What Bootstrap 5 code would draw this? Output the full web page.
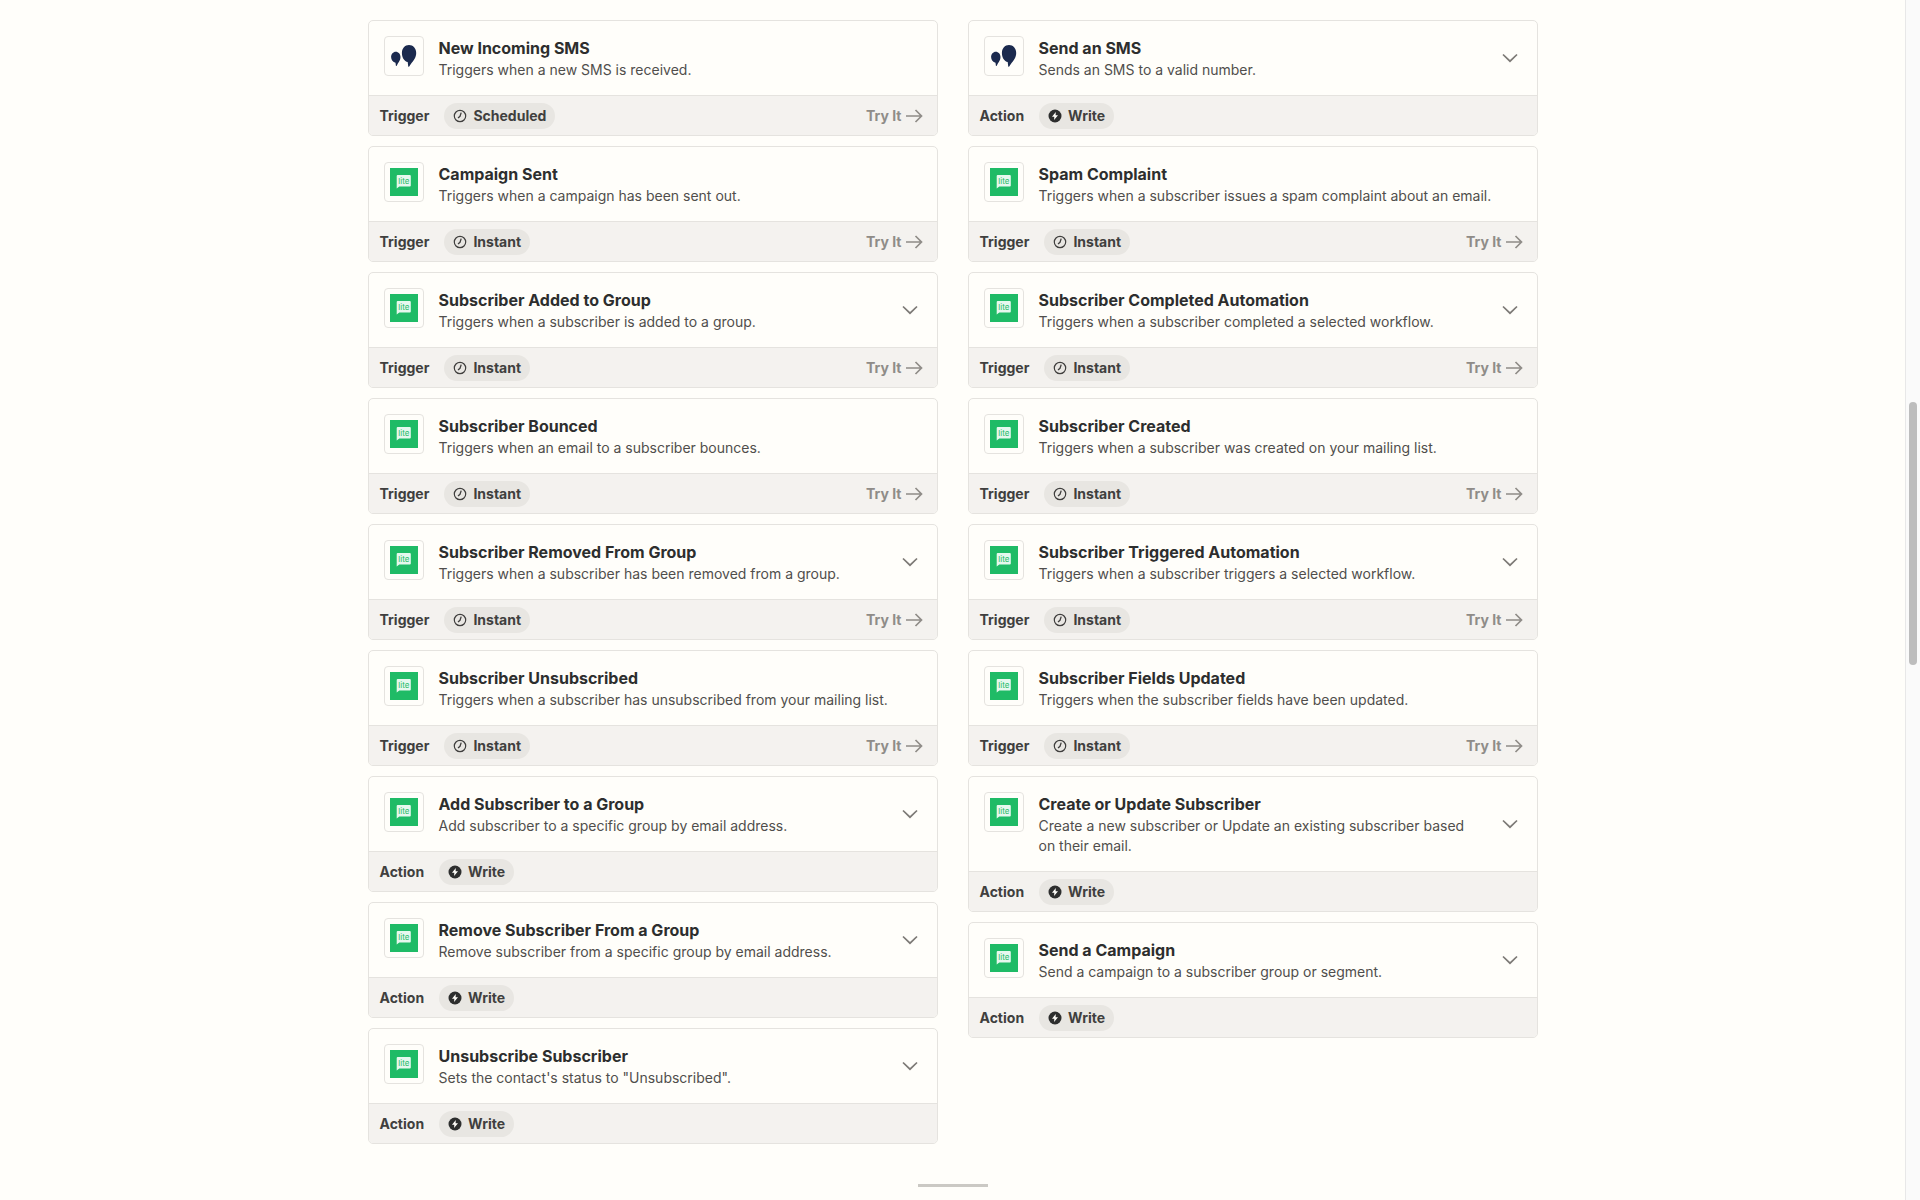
<!DOCTYPE html>
<html lang="en">
<head>
  <meta charset="UTF-8" />
  <meta name="viewport" content="width=device-width, initial-scale=1" />
  <title>MailerLite triggers and actions</title>
  <link href="https://cdn.jsdelivr.net/npm/bootstrap@5.3.0/dist/css/bootstrap.min.css" rel="stylesheet" />
  <style>
    html, body { height: 100%; overflow: hidden; }
    body { background: #fffefa; font-family: Inter, "Liberation Sans", sans-serif; color: #2d2e2e; }
    .page-main { flex: 1 1 auto; min-width: 0; height: 1200px; position: relative; }
    .app-list { width: 1170px; padding-top: 20px; gap: 30px; }
    .app-col { width: 570px; gap: 10px; }
    .app-card { border: 1px solid #e5e3df; border-radius: 5px; background: #fffefa; overflow: hidden; }
    .app-head { padding: 15px 19px 15px 15px; gap: 15px; }
    .app-logo { width: 40px; height: 40px; flex: none; border: 1px solid #e5e3df; border-radius: 4px; background: #fffefa; }
    .app-logo svg { display: block; width: 28px; height: 28px; }
    .app-title { font-size: 16px; line-height: 20px; font-weight: 700; color: #2d2e2e; margin: 2px 0; }
    .app-desc { font-size: 14px; line-height: 20px; color: #504e4c; margin: 0; }
    .app-chevron { flex: none; width: 16px; height: 10px; margin: 0 0 0 9px; align-self: center; color: #7d7a76; }
    .app-foot { height: 40px; padding: 0 11px; background: #f4f2ef; border-top: 1px solid #e5e3df; font-size: 14px; font-weight: 700; }
    .app-kind { color: #403f3e; }
    .app-pill { height: 26px; padding: 0 9px; margin-left: 15px; gap: 6px; background: #e8e6e2; border-radius: 13px; color: #403f3e; }
    .app-pill svg { width: 14px; height: 14px; flex: none; }
    .try-link { color: #8f8c88; gap: 4px; margin-right: 3px; }
    .try-link svg { width: 17px; height: 14px; }
    .page-rule { position: absolute; left: 918px; top: 1184px; width: 70px; height: 3px; background: #cbc9c4; }
    .fake-scroll { flex: none; width: 15px; height: 1200px; background: #fafafa; border-left: 1px solid #e8e8e8; position: relative; }
    .fake-thumb { position: absolute; left: 3px; top: 402px; width: 8px; height: 263px; border-radius: 4px; background: #bdbdbd; }
  </style>
</head>
<body>
  <svg class="d-none">
    <symbol id="ico-sms" viewBox="0 0 28 28">
      <path fill="#1b2a4e" d="M19 3c4.100 0 7.200 3.300 7.200 8 0 4.500-2.900 8-5 10.500l-2 3c-.3.500-.9.400-1-.2l-.5-4.300C14.300 19.500 11.900 15.500 11.900 11c0-4.700 3-8 7.100-8z"/>
      <path fill="#1b2a4e" d="M5.800 9.700c2.600 0 4.700 2.300 4.700 5.200 0 2.800-1.400 4.700-2.500 6.300l-1.300 2.600c-.2.400-.7.300-.8-.1l-.4-3C3 20 1.100 17.800 1.100 14.900 1.100 12 3.200 9.700 5.800 9.700z"/>
    </symbol>
    <symbol id="ico-lite" viewBox="0 0 28 28">
      <rect width="28" height="28" fill="#1fbb66"/>
      <path fill="#e6f8ee" d="M7.700 7h12.100a1 1 0 0 1 1 1v9.500a1 1 0 0 1-1 1H9.300L6.700 20.500V8a1 1 0 0 1 1-1z"/>
      <text x="13.800" y="15.500" text-anchor="middle" font-family="Inter, sans-serif" font-size="8" fill="#1fbb66">lite</text>
    </symbol>
    <symbol id="ico-clock" viewBox="0 0 14 14">
      <circle cx="7" cy="7" r="5.700" fill="none" stroke="#403f3e" stroke-width="1.200"/>
      <path fill="none" stroke="#403f3e" stroke-width="1.300" d="M8.200 3.600 7 7.300 5 9"/>
    </symbol>
    <symbol id="ico-write" viewBox="0 0 14 14">
      <circle cx="7" cy="7" r="6.500" fill="#2d2e2e"/>
      <path fill="#fffefa" d="M7.800 3 4 7.700h2.300L6.100 11 10 6.300H7.600z"/>
    </symbol>
    <symbol id="ico-arrow" viewBox="0 0 17 14">
      <path fill="none" stroke="currentColor" stroke-width="1.700" d="M0 7h15.500M9.500 1l6 6-6 6"/>
    </symbol>
    <symbol id="ico-chevron" viewBox="0 0 16 10">
      <path fill="none" stroke="currentColor" stroke-width="1.700" d="M1 1.500 8 8.200l7-6.700"/>
    </symbol>
  </svg>

  <div class="d-flex">
    <main class="page-main">
      <div class="app-list d-flex align-items-start mx-auto">

        <!-- left column -->
        <div class="app-col d-flex flex-column">
          <div class="app-card">
            <div class="app-head d-flex">
              <div class="app-logo d-flex align-items-center justify-content-center"><svg><use href="#ico-sms"/></svg></div>
              <div class="flex-grow-1"><h3 class="app-title">New Incoming SMS</h3><p class="app-desc">Triggers when a new SMS is received.</p></div>
            </div>
            <div class="app-foot d-flex align-items-center">
              <span class="app-kind">Trigger</span>
              <span class="app-pill d-inline-flex align-items-center"><svg><use href="#ico-clock"/></svg>Scheduled</span>
              <span class="try-link d-inline-flex align-items-center ms-auto">Try It <svg><use href="#ico-arrow"/></svg></span>
            </div>
          </div>
          <div class="app-card">
            <div class="app-head d-flex">
              <div class="app-logo d-flex align-items-center justify-content-center"><svg><use href="#ico-lite"/></svg></div>
              <div class="flex-grow-1"><h3 class="app-title">Campaign Sent</h3><p class="app-desc">Triggers when a campaign has been sent out.</p></div>
            </div>
            <div class="app-foot d-flex align-items-center">
              <span class="app-kind">Trigger</span>
              <span class="app-pill d-inline-flex align-items-center"><svg><use href="#ico-clock"/></svg>Instant</span>
              <span class="try-link d-inline-flex align-items-center ms-auto">Try It <svg><use href="#ico-arrow"/></svg></span>
            </div>
          </div>
          <div class="app-card">
            <div class="app-head d-flex">
              <div class="app-logo d-flex align-items-center justify-content-center"><svg><use href="#ico-lite"/></svg></div>
              <div class="flex-grow-1"><h3 class="app-title">Subscriber Added to Group</h3><p class="app-desc">Triggers when a subscriber is added to a group.</p></div>
              <svg class="app-chevron"><use href="#ico-chevron"/></svg>
            </div>
            <div class="app-foot d-flex align-items-center">
              <span class="app-kind">Trigger</span>
              <span class="app-pill d-inline-flex align-items-center"><svg><use href="#ico-clock"/></svg>Instant</span>
              <span class="try-link d-inline-flex align-items-center ms-auto">Try It <svg><use href="#ico-arrow"/></svg></span>
            </div>
          </div>
          <div class="app-card">
            <div class="app-head d-flex">
              <div class="app-logo d-flex align-items-center justify-content-center"><svg><use href="#ico-lite"/></svg></div>
              <div class="flex-grow-1"><h3 class="app-title">Subscriber Bounced</h3><p class="app-desc">Triggers when an email to a subscriber bounces.</p></div>
            </div>
            <div class="app-foot d-flex align-items-center">
              <span class="app-kind">Trigger</span>
              <span class="app-pill d-inline-flex align-items-center"><svg><use href="#ico-clock"/></svg>Instant</span>
              <span class="try-link d-inline-flex align-items-center ms-auto">Try It <svg><use href="#ico-arrow"/></svg></span>
            </div>
          </div>
          <div class="app-card">
            <div class="app-head d-flex">
              <div class="app-logo d-flex align-items-center justify-content-center"><svg><use href="#ico-lite"/></svg></div>
              <div class="flex-grow-1"><h3 class="app-title">Subscriber Removed From Group</h3><p class="app-desc">Triggers when a subscriber has been removed from a group.</p></div>
              <svg class="app-chevron"><use href="#ico-chevron"/></svg>
            </div>
            <div class="app-foot d-flex align-items-center">
              <span class="app-kind">Trigger</span>
              <span class="app-pill d-inline-flex align-items-center"><svg><use href="#ico-clock"/></svg>Instant</span>
              <span class="try-link d-inline-flex align-items-center ms-auto">Try It <svg><use href="#ico-arrow"/></svg></span>
            </div>
          </div>
          <div class="app-card">
            <div class="app-head d-flex">
              <div class="app-logo d-flex align-items-center justify-content-center"><svg><use href="#ico-lite"/></svg></div>
              <div class="flex-grow-1"><h3 class="app-title">Subscriber Unsubscribed</h3><p class="app-desc">Triggers when a subscriber has unsubscribed from your mailing list.</p></div>
            </div>
            <div class="app-foot d-flex align-items-center">
              <span class="app-kind">Trigger</span>
              <span class="app-pill d-inline-flex align-items-center"><svg><use href="#ico-clock"/></svg>Instant</span>
              <span class="try-link d-inline-flex align-items-center ms-auto">Try It <svg><use href="#ico-arrow"/></svg></span>
            </div>
          </div>
          <div class="app-card">
            <div class="app-head d-flex">
              <div class="app-logo d-flex align-items-center justify-content-center"><svg><use href="#ico-lite"/></svg></div>
              <div class="flex-grow-1"><h3 class="app-title">Add Subscriber to a Group</h3><p class="app-desc">Add subscriber to a specific group by email address.</p></div>
              <svg class="app-chevron"><use href="#ico-chevron"/></svg>
            </div>
            <div class="app-foot d-flex align-items-center">
              <span class="app-kind">Action</span>
              <span class="app-pill d-inline-flex align-items-center"><svg><use href="#ico-write"/></svg>Write</span>
            </div>
          </div>
          <div class="app-card">
            <div class="app-head d-flex">
              <div class="app-logo d-flex align-items-center justify-content-center"><svg><use href="#ico-lite"/></svg></div>
              <div class="flex-grow-1"><h3 class="app-title">Remove Subscriber From a Group</h3><p class="app-desc">Remove subscriber from a specific group by email address.</p></div>
              <svg class="app-chevron"><use href="#ico-chevron"/></svg>
            </div>
            <div class="app-foot d-flex align-items-center">
              <span class="app-kind">Action</span>
              <span class="app-pill d-inline-flex align-items-center"><svg><use href="#ico-write"/></svg>Write</span>
            </div>
          </div>
          <div class="app-card">
            <div class="app-head d-flex">
              <div class="app-logo d-flex align-items-center justify-content-center"><svg><use href="#ico-lite"/></svg></div>
              <div class="flex-grow-1"><h3 class="app-title">Unsubscribe Subscriber</h3><p class="app-desc">Sets the contact's status to "Unsubscribed".</p></div>
              <svg class="app-chevron"><use href="#ico-chevron"/></svg>
            </div>
            <div class="app-foot d-flex align-items-center">
              <span class="app-kind">Action</span>
              <span class="app-pill d-inline-flex align-items-center"><svg><use href="#ico-write"/></svg>Write</span>
            </div>
          </div>
        </div>

        <!-- right column -->
        <div class="app-col d-flex flex-column">
          <div class="app-card">
            <div class="app-head d-flex">
              <div class="app-logo d-flex align-items-center justify-content-center"><svg><use href="#ico-sms"/></svg></div>
              <div class="flex-grow-1"><h3 class="app-title">Send an SMS</h3><p class="app-desc">Sends an SMS to a valid number.</p></div>
              <svg class="app-chevron"><use href="#ico-chevron"/></svg>
            </div>
            <div class="app-foot d-flex align-items-center">
              <span class="app-kind">Action</span>
              <span class="app-pill d-inline-flex align-items-center"><svg><use href="#ico-write"/></svg>Write</span>
            </div>
          </div>
          <div class="app-card">
            <div class="app-head d-flex">
              <div class="app-logo d-flex align-items-center justify-content-center"><svg><use href="#ico-lite"/></svg></div>
              <div class="flex-grow-1"><h3 class="app-title">Spam Complaint</h3><p class="app-desc">Triggers when a subscriber issues a spam complaint about an email.</p></div>
            </div>
            <div class="app-foot d-flex align-items-center">
              <span class="app-kind">Trigger</span>
              <span class="app-pill d-inline-flex align-items-center"><svg><use href="#ico-clock"/></svg>Instant</span>
              <span class="try-link d-inline-flex align-items-center ms-auto">Try It <svg><use href="#ico-arrow"/></svg></span>
            </div>
          </div>
          <div class="app-card">
            <div class="app-head d-flex">
              <div class="app-logo d-flex align-items-center justify-content-center"><svg><use href="#ico-lite"/></svg></div>
              <div class="flex-grow-1"><h3 class="app-title">Subscriber Completed Automation</h3><p class="app-desc">Triggers when a subscriber completed a selected workflow.</p></div>
              <svg class="app-chevron"><use href="#ico-chevron"/></svg>
            </div>
            <div class="app-foot d-flex align-items-center">
              <span class="app-kind">Trigger</span>
              <span class="app-pill d-inline-flex align-items-center"><svg><use href="#ico-clock"/></svg>Instant</span>
              <span class="try-link d-inline-flex align-items-center ms-auto">Try It <svg><use href="#ico-arrow"/></svg></span>
            </div>
          </div>
          <div class="app-card">
            <div class="app-head d-flex">
              <div class="app-logo d-flex align-items-center justify-content-center"><svg><use href="#ico-lite"/></svg></div>
              <div class="flex-grow-1"><h3 class="app-title">Subscriber Created</h3><p class="app-desc">Triggers when a subscriber was created on your mailing list.</p></div>
            </div>
            <div class="app-foot d-flex align-items-center">
              <span class="app-kind">Trigger</span>
              <span class="app-pill d-inline-flex align-items-center"><svg><use href="#ico-clock"/></svg>Instant</span>
              <span class="try-link d-inline-flex align-items-center ms-auto">Try It <svg><use href="#ico-arrow"/></svg></span>
            </div>
          </div>
          <div class="app-card">
            <div class="app-head d-flex">
              <div class="app-logo d-flex align-items-center justify-content-center"><svg><use href="#ico-lite"/></svg></div>
              <div class="flex-grow-1"><h3 class="app-title">Subscriber Triggered Automation</h3><p class="app-desc">Triggers when a subscriber triggers a selected workflow.</p></div>
              <svg class="app-chevron"><use href="#ico-chevron"/></svg>
            </div>
            <div class="app-foot d-flex align-items-center">
              <span class="app-kind">Trigger</span>
              <span class="app-pill d-inline-flex align-items-center"><svg><use href="#ico-clock"/></svg>Instant</span>
              <span class="try-link d-inline-flex align-items-center ms-auto">Try It <svg><use href="#ico-arrow"/></svg></span>
            </div>
          </div>
          <div class="app-card">
            <div class="app-head d-flex">
              <div class="app-logo d-flex align-items-center justify-content-center"><svg><use href="#ico-lite"/></svg></div>
              <div class="flex-grow-1"><h3 class="app-title">Subscriber Fields Updated</h3><p class="app-desc">Triggers when the subscriber fields have been updated.</p></div>
            </div>
            <div class="app-foot d-flex align-items-center">
              <span class="app-kind">Trigger</span>
              <span class="app-pill d-inline-flex align-items-center"><svg><use href="#ico-clock"/></svg>Instant</span>
              <span class="try-link d-inline-flex align-items-center ms-auto">Try It <svg><use href="#ico-arrow"/></svg></span>
            </div>
          </div>
          <div class="app-card">
            <div class="app-head d-flex">
              <div class="app-logo d-flex align-items-center justify-content-center"><svg><use href="#ico-lite"/></svg></div>
              <div class="flex-grow-1"><h3 class="app-title">Create or Update Subscriber</h3><p class="app-desc">Create a new subscriber or Update an existing subscriber based on their email.</p></div>
              <svg class="app-chevron"><use href="#ico-chevron"/></svg>
            </div>
            <div class="app-foot d-flex align-items-center">
              <span class="app-kind">Action</span>
              <span class="app-pill d-inline-flex align-items-center"><svg><use href="#ico-write"/></svg>Write</span>
            </div>
          </div>
          <div class="app-card">
            <div class="app-head d-flex">
              <div class="app-logo d-flex align-items-center justify-content-center"><svg><use href="#ico-lite"/></svg></div>
              <div class="flex-grow-1"><h3 class="app-title">Send a Campaign</h3><p class="app-desc">Send a campaign to a subscriber group or segment.</p></div>
              <svg class="app-chevron"><use href="#ico-chevron"/></svg>
            </div>
            <div class="app-foot d-flex align-items-center">
              <span class="app-kind">Action</span>
              <span class="app-pill d-inline-flex align-items-center"><svg><use href="#ico-write"/></svg>Write</span>
            </div>
          </div>
        </div>

      </div>
      <div class="page-rule"></div>
    </main>
    <aside class="fake-scroll"><div class="fake-thumb"></div></aside>
  </div>

  <script src="https://cdn.jsdelivr.net/npm/bootstrap@5.3.0/dist/js/bootstrap.bundle.min.js"></script>
</body>
</html>
